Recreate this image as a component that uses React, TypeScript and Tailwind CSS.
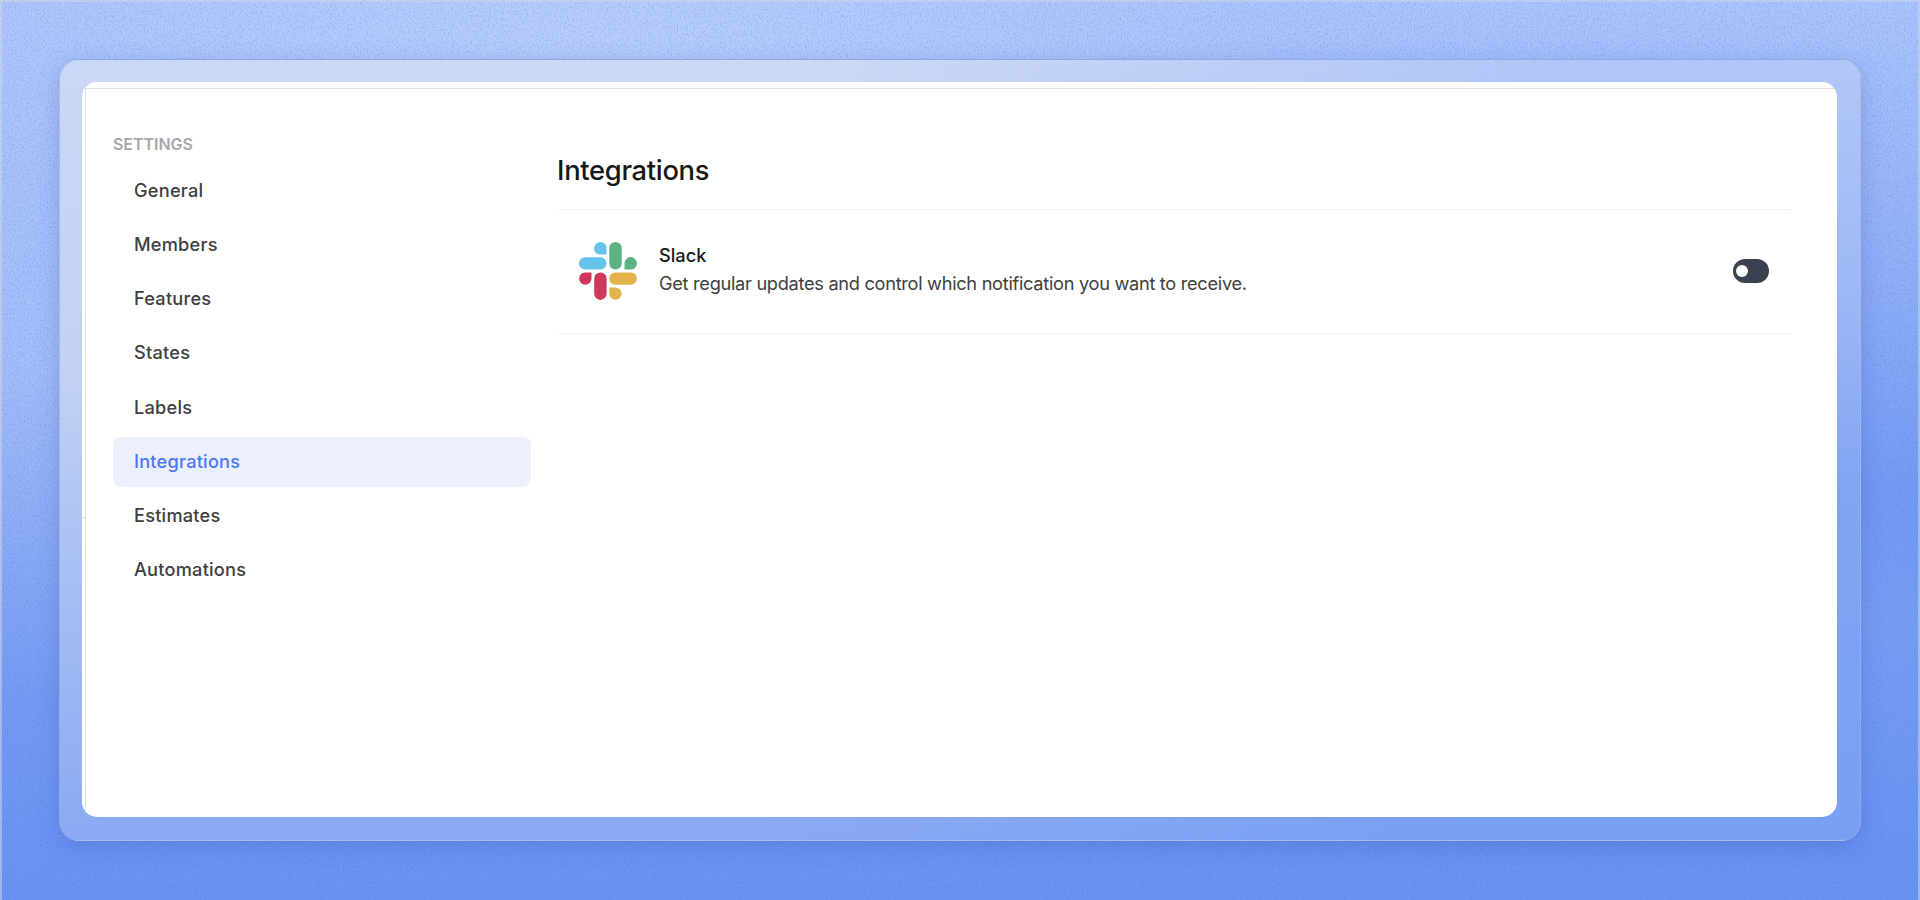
const items = ["General", "Members", "Features", "States", "Labels", "Integrations", "Estimates", "Automations"];

function SlackLogo() {
  return (
    <svg viewBox="0 0 58 58" className="h-[58px] w-[58px] shrink-0">
      <g fill="#66c3ec">
        <path d="M27.5 12.5V6.2A6.2 6.2 0 1 0 21.3 12.5Z" />
        <rect x="0" y="15.2" width="27.5" height="12.4" rx="6.2" />
      </g>
      <g fill="#5bb381">
        <rect x="30.3" y="0" width="12.4" height="27.5" rx="6.2" />
        <path d="M45.5 27.5V21.3A6.2 6.2 0 1 1 51.8 27.5Z" />
      </g>
      <g fill="#cf375c">
        <path d="M12.5 30.4V36.6A6.2 6.2 0 1 1 6.2 30.4Z" />
        <rect x="15.2" y="30.4" width="12.4" height="27.5" rx="6.2" />
      </g>
      <g fill="#e2b34a">
        <rect x="30.3" y="30.4" width="27.6" height="12.4" rx="6.2" />
        <path d="M30.3 45.5H36.5A6.2 6.2 0 1 1 30.3 51.7Z" />
      </g>
    </svg>
  );
}

export default function App() {
  return (
    <div className="relative h-[900px] w-[1920px] overflow-hidden bg-[linear-gradient(180deg,#abc4fc_0%,#a4befa_40%,#8dadf6_58%,#739af4_78%,#6993f3_100%)] font-['Inter',sans-serif]">
      <div className="absolute inset-0 bg-[linear-gradient(180deg,#abc4fc_0%,#9db8f9_18%,#8aabf7_35%,#7299f4_55%,#769df5_70%,#6993f3_95%)] mask-[linear-gradient(90deg,transparent_50%,black_80%)]" />
      <div className="absolute inset-0 bg-[radial-gradient(ellipse_700px_240px_at_600px_40px,#bcd1fcb0_0%,transparent_100%)]" />
      <svg className="absolute inset-0 h-full w-full opacity-[0.17]">
        <filter id="grain" colorInterpolationFilters="sRGB">
          <feTurbulence type="fractalNoise" baseFrequency="0.7 0.45" numOctaves="2" seed="4" />
          <feColorMatrix values="0 0 0 0 0.3  0 0 0 0 0.42  0 0 0 0 0.74  5 0 0 0 -2.5" />
        </filter>
        <rect width="100%" height="100%" filter="url(#grain)" />
      </svg>
      <div className="absolute inset-0 border-x-2 border-t-2 border-[#cdd6e8]/55" />
      <div className="relative h-full w-full px-[59px] pt-[59px] pb-[59px]">
        <div className="relative h-[782px] w-[1802px] overflow-visible rounded-[20px] border border-[#93a9e4]/60 bg-[linear-gradient(180deg,#cad8f5_0%,#c3d2f4_40%,#a9c0f4_65%,#8aa9f3_100%)] shadow-[0_6px_22px_rgba(50,80,170,0.28)]">
          <div className="absolute inset-0 rounded-[19px] bg-[linear-gradient(180deg,#b2c7f7_0%,#9db8f6_30%,#82a4f3_55%,#799ff3_100%)] mask-[linear-gradient(97deg,transparent_42%,black_78%)]" />
          <main className="relative mt-[22px] ml-[22px] h-[735px] w-[1755px] overflow-hidden rounded-[15px] bg-white pt-[6px]">
            <div className="flex h-full border-t border-[#dedede]">
              <div className="w-[3px] shrink-0 pt-[428px]">
                <div className="h-px bg-[#e0e0e0]" />
              </div>
              <aside className="w-[446px] shrink-0 border-l border-[#e0e0e0] pt-[43px] pl-[27px]">
                <h2 className="h-[34.2px] text-[16px] leading-[24px] font-semibold tracking-[-0.05px] text-[#a8a8a8]">SETTINGS</h2>
                <nav className="flex w-[418px] flex-col gap-[4.5px]">
                  {items.map((item) => (
                    <a
                      key={item}
                      className={
                        item === "Integrations"
                          ? "flex h-[49.7px] items-center rounded-[8px] bg-[#ecf0fd] px-[21px] pb-px text-[18.2px] font-medium tracking-[0.22px] text-[#4d76f6]"
                          : "flex h-[49.7px] items-center rounded-[8px] px-[21px] pb-px text-[18.2px] font-medium tracking-[0.22px] text-[#404040]"
                      }
                    >
                      {item}
                    </a>
                  ))}
                </nav>
              </aside>
              <section className="ml-[27px] w-[1232px] pt-[62px]">
                <div className="h-[59px] border-b border-[#f0f0f0]">
                  <h1 className="-ml-px text-[27.3px] leading-[40px] font-medium tracking-[-0.28px] text-[#171717]">Integrations</h1>
                </div>
                <div className="flex h-[124px] items-center border-b border-[#f0f0f0] pr-[21px] pb-[2px] pl-[21px]">
                  <SlackLogo />
                  <div className="ml-[22px] flex-1 pb-[3px]">
                    <h3 className="text-[18.2px] leading-[27px] font-medium text-[#171717]">Slack</h3>
                    <p className="text-[18.2px] leading-[28px] tracking-[-0.29px] text-[#404040]">
                      Get regular updates and control which notification you want to receive.
                    </p>
                  </div>
                  <button className="flex h-[24px] w-[36px] items-center rounded-full bg-[#3a4150] pl-[3px]">
                    <span className="h-[12px] w-[12px] rounded-full bg-white" />
                  </button>
                </div>
              </section>
            </div>
          </main>
        </div>
      </div>
    </div>
  );
}
